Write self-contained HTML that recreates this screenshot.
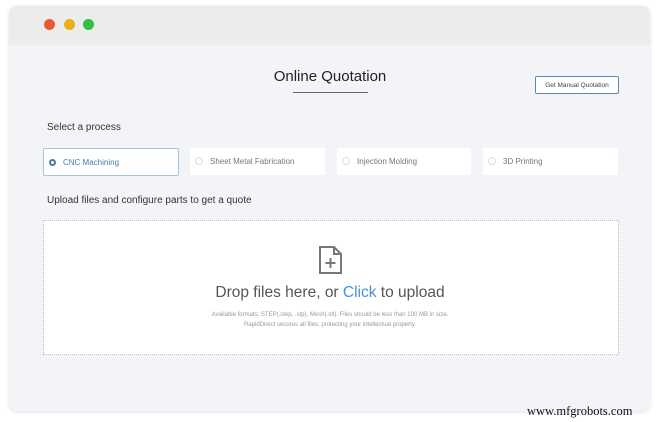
<!DOCTYPE html><html><head><style>
body{margin:0;width:658px;height:422px;background:#fff;position:relative;overflow:hidden;font-family:"Liberation Sans",sans-serif}
.win{position:absolute;left:9px;top:6px;width:641px;height:405px;background:#f3f4f8;border-radius:8px;box-shadow:0 1px 4px rgba(0,0,0,.12);overflow:hidden}
.bar{height:39px;background:#ececec}
.d{position:absolute;top:19px;width:11px;height:11px;border-radius:50%}
.a{position:absolute}
.opt{position:absolute;top:148px;height:27px;background:#fff;font-size:8px;color:#777;line-height:27px;border-radius:2px}
.opt i{display:inline-block;width:6px;height:6px;border:1px solid #ddd;border-radius:50%;margin:0 7px 0 5px;vertical-align:-1px}
</style></head><body>
<div class="win"><div class="bar"></div></div>
<div class="d" style="left:44px;background:#e85c33"></div>
<div class="d" style="left:64px;background:#e9b01c"></div>
<div class="d" style="left:83px;background:#2fc143"></div>
<div class="a" style="left:220px;width:220px;top:68px;text-align:center;font-size:15px;color:#222">Online Quotation</div>
<div class="a" style="left:293px;top:92px;width:75px;height:1px;background:#666"></div>
<div class="a" style="left:535px;top:76px;width:82px;height:16px;border:1px solid #5b8ab0;border-radius:2px;background:#fff;font-size:6.5px;color:#345;text-align:center;line-height:17px">Get Manual Quotation</div>
<div class="a" style="left:47px;top:122px;font-size:10px;color:#333">Select a process</div>
<div class="opt" style="left:43px;width:134px;border:1px solid #a9c3dc;top:148px;height:26px;color:#4a7aa8"><i style="border:2px solid #4a7aa8;width:3px;height:3px"></i>CNC Machining</div>
<div class="opt" style="left:190px;width:135px"><i></i>Sheet Metal Fabrication</div>
<div class="opt" style="left:337px;width:134px"><i></i>Injection Molding</div>
<div class="opt" style="left:483px;width:135px"><i></i>3D Printing</div>
<div class="a" style="left:47px;top:195px;font-size:10px;color:#333">Upload files and configure parts to get a quote</div>
<div class="a" style="left:43px;top:220px;width:574px;height:133px;background:#fff;border:1px dotted #bbb"></div>
<svg class="a" style="left:318px;top:246px" width="26" height="28" viewBox="0 0 26 28"><path d="M2 1H16L23 8V27H2Z M16 1V8H23 M12.5 12V22 M7.5 17H17.5" fill="none" stroke="#777" stroke-width="2"/></svg>
<div class="a" style="left:150px;width:360px;top:284px;text-align:center;font-size:15.5px;color:#555">Drop files here, or <span style="color:#4a90d9">Click</span> to upload</div>
<div class="a" style="left:150px;width:360px;top:310px;text-align:center;font-size:6px;color:#999;line-height:10px">Available formats: STEP(.step, .stp), Mesh(.stl). Files should be less than 100 MB in size.<br>RapidDirect secures all files, protecting your intellectual property.</div>
<div class="a" style="left:527px;top:404px;font-family:'Liberation Serif',serif;font-size:12.5px;color:#111">www.mfgrobots.com</div>
</body></html>
